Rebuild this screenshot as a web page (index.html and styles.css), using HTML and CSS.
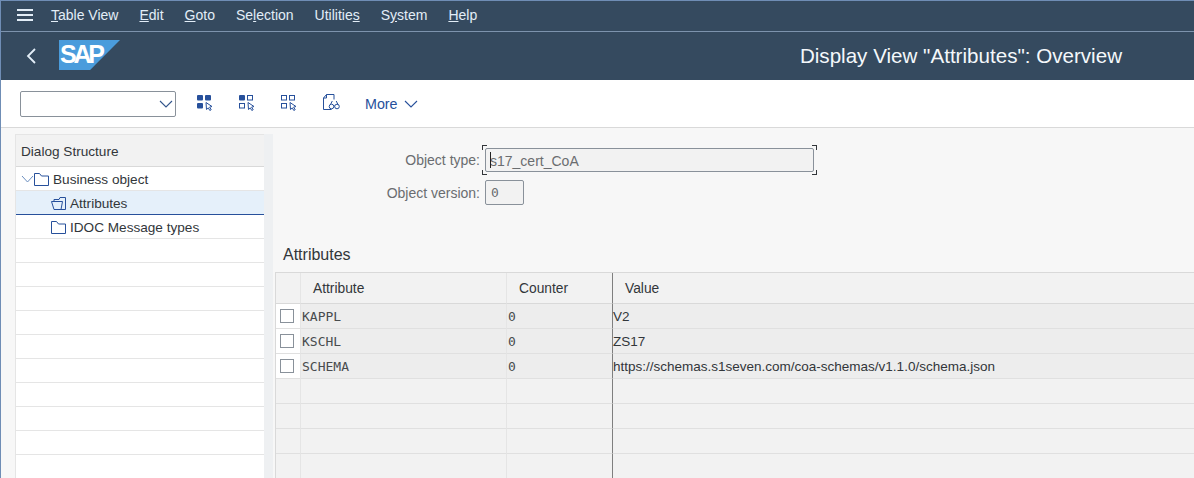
FILE: index.html
```html
<!DOCTYPE html>
<html lang="en">
  <head>
    <meta charset="UTF-8" />
    <title>Display View "Attributes": Overview</title>
    <link rel="stylesheet" href="styles.css">
  </head>
  <body>
    <header class="shell">
      <nav class="menu">
        <svg class="burger" width="18" height="14" viewBox="0 0 18 14"><path d="M1 2h16M1 7h16M1 12h16" stroke="#e3eef8" stroke-width="2" fill="none"/></svg>
        <span><u>T</u>able View</span>
        <span><u>E</u>dit</span>
        <span><u>G</u>oto</span>
        <span>Se<u>l</u>ection</span>
        <span>Utilitie<u>s</u></span>
        <span>S<u>y</u>stem</span>
        <span><u>H</u>elp</span>
      </nav>
      <div class="titlebar">
        <svg class="back" width="12" height="18" viewBox="0 0 12 18"><path d="M10 2 3 9l7 7" stroke="#e3eef8" stroke-width="1.8" fill="none"/></svg>
        <div class="logo"><span>SAP</span></div>
        <h1>Display View "Attributes": Overview</h1>
      </div>
    </header>

    <div class="toolbar">
      <div class="combo">
        <svg width="14" height="8" viewBox="0 0 14 8"><path d="M1 1l6 6 6-6" stroke="#32558c" stroke-width="1.1" fill="none"/></svg>
      </div>
      <button class="tool">
        <svg width="17" height="17" viewBox="0 0 17 17">
          <rect x="0" y="1" width="6" height="5.5" rx="1" fill="#27509b"/><rect x="8" y="1" width="6" height="5.5" rx="1" fill="#27509b"/><rect x="0" y="9" width="6" height="5.5" rx="1" fill="#27509b"/>
          <path class="cursor" d="M9 8.500l6 4-2.400.6 1.600 2.600-1.400.8-1.500-2.600-1.800 1.600z"/>
        </svg>
      </button>
      <button class="tool">
        <svg width="17" height="17" viewBox="0 0 17 17">
          <rect x="0" y="1" width="6" height="5.5" rx="1" fill="#27509b"/><rect class="box" x="8.500" y="1.500" width="5" height="4.500"/><rect class="box" x="0.500" y="9.500" width="5" height="4.500"/>
          <path class="cursor" d="M9 8.500l6 4-2.400.6 1.600 2.600-1.400.8-1.500-2.600-1.800 1.600z"/>
        </svg>
      </button>
      <button class="tool">
        <svg width="17" height="17" viewBox="0 0 17 17">
          <rect class="box" x="0.500" y="1.500" width="5" height="4.500"/><rect class="box" x="8.500" y="1.500" width="5" height="4.500"/><rect class="box" x="0.500" y="9.500" width="5" height="4.500"/>
          <path class="cursor" d="M9 8.500l6 4-2.400.6 1.600 2.600-1.400.8-1.500-2.600-1.800 1.600z"/>
        </svg>
      </button>
      <button class="tool">
        <svg width="17" height="17" viewBox="0 0 17 17">
          <path class="line" d="M3.500.5h7.500v5M3.500.5 .5 4v11.500h8"/><path class="line" d="M.5 4h3V.5"/>
          <circle class="line" cx="8.500" cy="12.500" r="2.300"/><circle class="line" cx="14" cy="12.500" r="2.300"/><path class="line" d="M10.800 12h.9M7.500 10.500l1.800-3.500M15 10.500l-1.800-3.500"/>
        </svg>
      </button>
      <button class="more">More
        <svg width="14" height="8" viewBox="0 0 14 8"><path d="M1 1l6 6 6-6" stroke="#27509b" stroke-width="1.1" fill="none"/></svg>
      </button>
    </div>

    <main class="content">
      <aside class="tree">
        <div class="tree-head">Dialog Structure</div>
        <div class="tree-row">
          <svg class="twisty" width="13" height="8" viewBox="0 0 13 8"><path d="M1 1l5.500 6L12 1" stroke="#6c8fc0" stroke-width="1" fill="none"/></svg>
          <svg class="folder" width="15" height="13" viewBox="0 0 15 13"><path d="M.5 12.500V.5h5l2 2.500h7v9.500z" stroke="#27509b" fill="none"/></svg>
          Business object
        </div>
        <div class="tree-row indent selected">
          <svg class="folder" width="15" height="13" viewBox="0 0 15 13"><path d="M3 12.500.5 4.500h11l-1.500 8zM3 4V2.500h5L9 .5h5.500V12.500H10" stroke="#27509b" fill="none"/></svg>
          Attributes
        </div>
        <div class="tree-row indent">
          <svg class="folder" width="15" height="13" viewBox="0 0 15 13"><path d="M.5 12.500V.5h5l2 2.500h7v9.500z" stroke="#27509b" fill="none"/></svg>
          IDOC Message types
        </div>
        <div class="tree-row"></div>
        <div class="tree-row"></div>
        <div class="tree-row"></div>
        <div class="tree-row"></div>
        <div class="tree-row"></div>
        <div class="tree-row"></div>
        <div class="tree-row"></div>
        <div class="tree-row"></div>
        <div class="tree-row"></div>
        <div class="tree-row"></div>
      </aside>
      <div class="splitter"></div>

      <section class="detail">
        <div class="form">
          <div class="form-row first">
            <label>Object type:</label>
            <div class="field wide focused">
              <span class="caret"></span>
              <span class="corner tl"></span><span class="corner tr"></span><span class="corner bl"></span><span class="corner br"></span>
              s17_cert_CoA
            </div>
          </div>
          <div class="form-row">
            <label>Object version:</label>
            <div class="field narrow mono">0</div>
          </div>
        </div>

        <h2>Attributes</h2>

        <table class="grid">
          <colgroup>
            <col class="c-sel"><col class="c-attr"><col class="c-count"><col>
          </colgroup>
          <thead>
            <tr><th></th><th>Attribute</th><th class="sep">Counter</th><th>Value</th></tr>
          </thead>
          <tbody>
            <tr><td class="sel"><span class="check"></span></td><td class="mono">KAPPL</td><td class="mono sep">0</td><td class="val">V2</td></tr>
            <tr><td class="sel"><span class="check"></span></td><td class="mono">KSCHL</td><td class="mono sep">0</td><td class="val">ZS17</td></tr>
            <tr><td class="sel"><span class="check"></span></td><td class="mono">SCHEMA</td><td class="mono sep">0</td><td class="val">https://schemas.s1seven.com/coa-schemas/v1.1.0/schema.json</td></tr>
            <tr class="empty"><td></td><td></td><td class="sep"></td><td></td></tr>
            <tr class="empty"><td></td><td></td><td class="sep"></td><td></td></tr>
            <tr class="empty"><td></td><td></td><td class="sep"></td><td></td></tr>
            <tr class="empty"><td></td><td></td><td class="sep"></td><td></td></tr>
          </tbody>
        </table>
      </section>
    </main>
  </body>
</html>
```

FILE: styles.css
```css
html, body {
  height: 100%;
}

body {
  margin: 0;
  height: 478px;
  overflow: hidden;
  display: flex;
  flex-direction: column;
  font-family: "Liberation Sans", Arial, sans-serif;
  font-size: 14px;
  color: #32363a;
  background-color: #f7f7f7;
  border-left: 1px solid #6f8db5;
  border-top: 1px solid #6f8db5;
  box-sizing: border-box;
}

.shell {
  background-color: #354a5f;
  color: #e3eef8;
  flex: none;
}

.menu {
  height: 28px;
  display: flex;
  align-items: center;
  gap: 21px;
  padding: 0 0 2px 15px;
  border-bottom: 1px solid #7d93ad;
  font-size: 14px;
}

.burger {
  margin-right: -4px;
}

.titlebar {
  height: 48px;
  display: flex;
  align-items: center;
  padding: 0 72px 0 24px;
}

.back {
  margin-right: 22px;
}

.logo {
  width: 61px;
  height: 30px;
  margin-top: -2px;
  background-color: #4a9cdc;
  clip-path: polygon(0 0, 100% 0, 51% 100%, 0 100%);
  font-weight: bold;
  font-size: 25px;
  letter-spacing: -3.200px;
  line-height: 29px;
  color: #fff;
  padding-left: 1px;
  box-sizing: border-box;
}

h1 {
  margin: 0 0 0 auto;
  font-size: 20.600px;
  font-weight: normal;
  color: #f4f8fb;
}

.toolbar {
  height: 47px;
  flex: none;
  background-color: #fff;
  border-bottom: 1px solid #d9d9d9;
  display: flex;
  align-items: center;
  padding-left: 19px;
}

.combo {
  width: 156px;
  height: 26px;
  box-sizing: border-box;
  border: 1px solid #89919a;
  border-radius: 2px;
  display: flex;
  align-items: center;
  justify-content: flex-end;
  padding-right: 2px;
  margin-right: 21px;
}

.tool {
  width: 42px;
  height: 26px;
  border: none;
  background: none;
  padding: 0;
  text-align: left;
}

.cursor {
  fill: #fff;
  stroke: #27509b;
  stroke-width: 1;
}

.box, .line {
  fill: none;
  stroke: #27509b;
  stroke-width: 1;
}

.more {
  border: none;
  background: none;
  padding: 0;
  font: inherit;
  font-size: 14.300px;
  color: #27509b;
  display: flex;
  align-items: center;
  gap: 6px;
}

.content {
  flex: 1;
  display: flex;
  min-height: 0;
  padding: 6px 0 0 14px;
}

.tree {
  width: 249px;
  flex: none;
  font-size: 13.600px;
  background-color: #fff;
  border-left: 1px solid #e5e5e5;
  box-sizing: border-box;
  overflow: hidden;
}

.tree-head {
  height: 33px;
  line-height: 33px;
  padding-left: 5px;
  background-color: #f2f2f2;
  border-top: 1px solid #e5e5e5;
  border-bottom: 1px solid #d9d9d9;
  box-sizing: border-box;
}

.tree-row {
  height: 24px;
  display: flex;
  align-items: center;
  gap: 4px;
  padding: 1px 0 0 5px;
  border-bottom: 1px solid #e5e5e5;
  box-sizing: border-box;
}

.twisty {
  margin-right: -4px;
}

.indent {
  padding-left: 35px;
}

.selected {
  background-color: #e5f0fa;
  border-bottom-color: #27509b;
}

.splitter {
  width: 9px;
  flex: none;
  background-color: #eef0f2;
}

.detail {
  flex: 1;
  min-width: 0;
  padding-left: 2px;
}

.form {
  padding-top: 13px;
  height: 99px;
}

.form-row {
  display: flex;
  align-items: center;
  height: 25px;
  margin-bottom: 8px;
  color: #6a6d70;
}

.form-row label {
  width: 205px;
  text-align: right;
  margin-right: 5px;
}

.field {
  position: relative;
  height: 24px;
  line-height: 24px;
  box-sizing: border-box;
  border: 1px solid #89919a;
  border-radius: 2px;
  background-color: #f2f2f2;
  color: #6a6d70;
  padding-left: 4px;
  white-space: nowrap;
}

.wide {
  width: 329px;
}

.narrow {
  width: 39px;
  height: 25px;
  padding-left: 5px;
}

.caret {
  position: absolute;
  left: 4px;
  top: 3px;
  height: 16px;
  width: 1px;
  background-color: #222;
}

.corner {
  position: absolute;
  width: 4px;
  height: 4px;
  border: 0 solid #32363a;
}

.tl { left: -4px; top: -4px; border-width: 1px 0 0 1px; }
.tr { right: -4px; top: -4px; border-width: 1px 1px 0 0; }
.bl { left: -4px; bottom: -4px; border-width: 0 0 1px 1px; }
.br { right: -4px; bottom: -4px; border-width: 0 1px 1px 0; }

h2 {
  margin: 0 0 8px 8px;
  font-size: 16px;
  line-height: 18px;
  font-weight: normal;
  color: #32363a;
}

.grid {
  border-collapse: separate;
  border-spacing: 0;
  table-layout: fixed;
  width: 930px;
  font-size: 13.500px;
  background-color: #f2f2f2;
  border-left: 1px solid #d9d9d9;
  border-top: 1px solid #d9d9d9;
}

.c-sel { width: 25px; }
.c-attr { width: 206px; }
.c-count { width: 106px; }

.grid th {
  height: 31px;
  padding: 0 0 0 12px;
  font-size: 13.800px;
  font-weight: normal;
  text-align: left;
  border-bottom: 1px solid #d9d9d9;
  border-right: 1px solid #e5e5e5;
  box-sizing: border-box;
}

.grid td {
  height: 25px;
  padding: 0 0 0 1px;
  white-space: nowrap;
  background-color: #ededed;
  border-bottom: 1px solid #e0e0e0;
  border-right: 1px solid #e5e5e5;
  box-sizing: border-box;
}

.grid td.val {
  padding-left: 0;
}

.grid .empty td {
  background-color: #f2f2f2;
}

.grid th.sep, .grid td.sep {
  border-right: 1px solid #7f7f7f;
}

.grid td.sel {
  background-color: #fff;
  padding: 0 0 0 4px;
}

.grid .empty td.sel {
  background-color: #f2f2f2;
}

.check {
  display: block;
  width: 14px;
  height: 14px;
  box-sizing: border-box;
  border: 1px solid #89919a;
  background-color: #fff;
}

.mono {
  font-family: "DejaVu Sans Mono", "Liberation Mono", monospace;
  font-size: 13px;
}

.grid td.mono {
  color: #484b4e;
}
```
